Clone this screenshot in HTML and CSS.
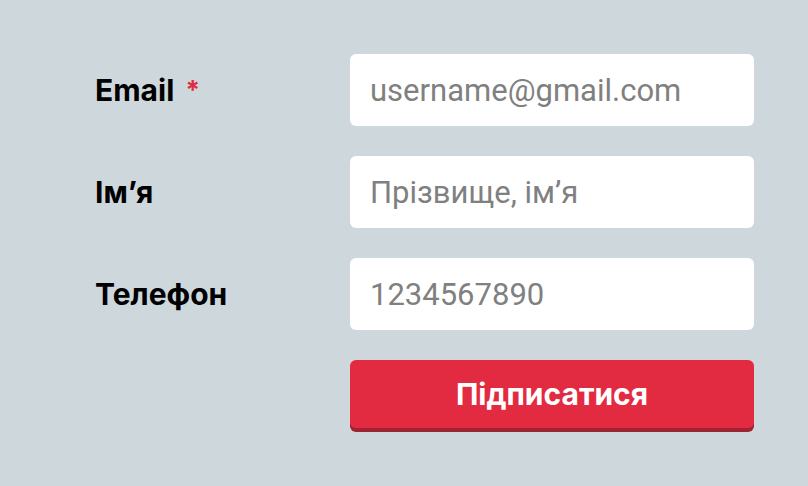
FILE: index.html
```html
<!DOCTYPE html>
<html lang="uk">
<head>
  <meta charset="UTF-8" />
  <meta name="viewport" content="width=device-width, initial-scale=1.0"/>
  <title>Підписка</title>
  <link rel="stylesheet" href="styles.css">
</head>
<body>
  <form class="subscribe">
    <label class="field-label" for="email">Email <span class="req">*</span></label>
    <input class="field-input" type="email" id="email" placeholder="username@gmail.com" />

    <label class="field-label" for="name">Ім’я</label>
    <input class="field-input" type="text" id="name" placeholder="Прізвище, ім’я" />

    <label class="field-label" for="phone">Телефон</label>
    <input class="field-input" type="tel" id="phone" placeholder="1234567890" />

    <span></span>
    <button class="submit" type="submit">Підписатися</button>
  </form>
</body>
</html>
```

FILE: styles.css
```css
body { margin: 0; background: #ced8dc; font-family: Inter, "Noto Sans", sans-serif; }
.subscribe {
  display: grid;
  grid-template-columns: 255px 404px;
  row-gap: 30px;
  align-items: center;
  padding: 54px 0 0 95px;
}
.field-label { font-size: 30px; font-weight: 700; color: #000; }
.req { color: #e22a41; margin-left: 4px; font-size: 26px; vertical-align: 2px; }
.field-input {
  height: 72px;
  box-sizing: border-box;
  border: none;
  border-radius: 6px;
  background: #fff;
  padding: 0 20px;
  font-family: Roboto, sans-serif;
  font-size: 31px;
  color: #222;
  outline: none;
}
.field-input::placeholder { color: #808080; }
.submit {
  height: 68px;
  margin-bottom: 4px;
  border: none;
  border-radius: 6px;
  background: #e22a41;
  box-shadow: 0 4px 0 #9e2431;
  color: #fff;
  font-family: Inter, sans-serif;
  font-size: 30px;
  font-weight: 700;
  cursor: pointer;
}
```
